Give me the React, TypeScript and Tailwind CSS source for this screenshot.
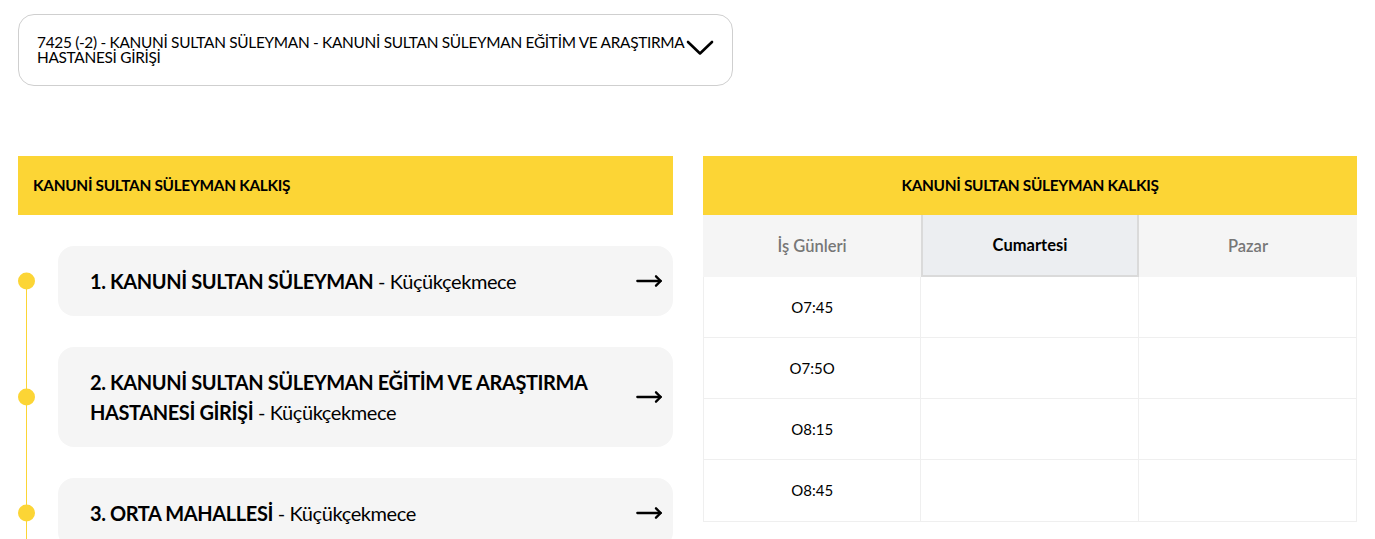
import { MoveRight } from 'lucide-react';

const stops = [
  { no: 1, name: 'KANUNİ SULTAN SÜLEYMAN', district: 'Küçükçekmece' },
  { no: 2, name: 'KANUNİ SULTAN SÜLEYMAN EĞİTİM VE ARAŞTIRMA HASTANESİ GİRİŞİ', district: 'Küçükçekmece' },
  { no: 3, name: 'ORTA MAHALLESİ', district: 'Küçükçekmece' },
];

const times = ['O7:45', 'O7:5O', 'O8:15', 'O8:45'];

export default function App() {
  return (
    <div className="min-h-screen bg-white text-black font-['Lato','Open_Sans',sans-serif]">
      <div className="px-[18px] pt-[14px]">
        {/* Route select */}
        <div className="w-[715px] h-[72px] rounded-2xl border border-[#cfcfcf] flex items-center pl-[18px] pr-[18px]">
          <div className="flex-1 text-[15.4px] leading-[15px] tracking-[-0.3px]">
            7425 (-2) - KANUNİ SULTAN SÜLEYMAN - KANUNİ SULTAN SÜLEYMAN EĞİTİM VE ARAŞTIRMA HASTANESİ GİRİŞİ
          </div>
          <svg width="28" height="16" viewBox="0 0 28 16" fill="none" className="shrink-0 -mt-[4px]">
            <path d="M2 2 L14 13.5 L26 2" stroke="black" strokeWidth="2.6" strokeLinecap="round" strokeLinejoin="round" />
          </svg>
        </div>

        <div className="mt-[70px] flex gap-[30px]">
          {/* Stops */}
          <div className="w-[655px]">
            <div className="h-[59px] bg-[#fcd535] flex items-center px-[15px] text-[15.4px] font-bold tracking-[-0.3px]">
              KANUNİ SULTAN SÜLEYMAN KALKIŞ
            </div>
            <div className="mt-[31px] flex flex-col gap-[31px]">
              {stops.map((s, i) => (
                <div key={s.no} className="relative flex">
                  <div className="relative w-[40px] shrink-0">
                    <div className="absolute left-[7.5px] bottom-[-31px] w-[1.5px] bg-[#fcd535]" style={{ top: i === 0 ? '50%' : '-31px' }} />
                    <div className="absolute left-0 top-1/2 -translate-y-1/2 w-[17px] h-[17px] rounded-full bg-[#fcd535]" />
                  </div>
                  <div className="flex-1 flex items-center justify-between rounded-2xl bg-[#f5f5f5] pl-[32px] pr-[10px] py-[20px] min-h-[70px]">
                    <div className="text-[20px] leading-[30px] tracking-[-0.4px] pr-[40px]">
                      <span className="font-bold">{s.no}. {s.name}</span> - {s.district}
                    </div>
                    <MoveRight size={28} strokeWidth={2} className="shrink-0" />
                  </div>
                </div>
              ))}
            </div>
          </div>

          {/* Timetable */}
          <div className="w-[654px]">
            <div className="h-[59px] bg-[#fcd535] flex items-center justify-center text-[15.4px] font-bold tracking-[-0.3px]">
              KANUNİ SULTAN SÜLEYMAN KALKIŞ
            </div>
            <div className="grid grid-cols-3 h-[62px] bg-[#f5f5f5] text-[16.5px]">
              <div className="flex items-center justify-center font-semibold text-[#777]">İş Günleri</div>
              <div className="flex items-center justify-center font-bold bg-[#eceef1] border-2 border-[#dadada] border-t-0">Cumartesi</div>
              <div className="flex items-center justify-center font-semibold text-[#777]">Pazar</div>
            </div>
            <div className="border border-t-0 border-[#efefef]">
              {times.map((t) => (
                <div key={t} className="grid grid-cols-3 h-[61px] border-b border-[#efefef] last:border-b-0 text-[15px]">
                  <div className="flex items-center justify-center border-r border-[#efefef]">{t}</div>
                  <div className="border-r border-[#efefef]" />
                  <div />
                </div>
              ))}
            </div>
          </div>
        </div>
      </div>
    </div>
  );
}
